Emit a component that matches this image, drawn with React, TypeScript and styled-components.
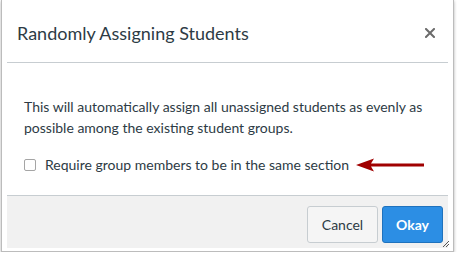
import styled, { createGlobalStyle } from 'styled-components';

const GlobalStyle = createGlobalStyle`
  html, body {
    margin: 0;
    padding: 0;
    background: #ffffff;
  }
  body {
    font-family: Lato, "Open Sans", "Liberation Sans", sans-serif;
    color: #2d3b45;
  }
`;

const App = () => {
  return (
    <>
      <GlobalStyle />
      <Dialog>
        <Header>
          <Title>Randomly Assigning Students</Title>
          <CloseButton aria-label="Close">
            <svg width="10" height="10" viewBox="0 0 10 10">
              <path d="M1 1 L9 9 M9 1 L1 9" stroke="#6b6b6b" strokeWidth="2" strokeLinecap="square" />
            </svg>
          </CloseButton>
        </Header>
        <Body>
          <Message>
            This will automatically assign all unassigned students as evenly as possible among the
            existing student groups.
          </Message>
          <CheckRow>
            <Check type="checkbox" />
            <CheckLabel>Require group members to be in the same section</CheckLabel>
            <Arrow width="69" height="14" viewBox="0 0 69 14">
              <path d="M0 7 L18 0.5 L15 5.5 L68 5.5 L68 8.5 L15 8.5 L18 13.5 Z" fill="#a00000" />
            </Arrow>
          </CheckRow>
        </Body>
        <Footer>
          <Button $w={71}>Cancel</Button>
          <Button $w={61} $primary>
            Okay
          </Button>
        </Footer>
        <Grip width="8" height="8" viewBox="0 0 8 8">
          <path d="M1 7 L7 1 M4 7 L7 4" stroke="#555" strokeWidth="1" />
        </Grip>
      </Dialog>
    </>
  );
};

export default App;

const Dialog = styled.div`
  position: relative;
  box-sizing: border-box;
  width: 453px;
  margin-left: 1px;
  padding: 0 5px 3px;
  border: 1px solid #bcbcbc;
  border-top: none;
  background: #ffffff;
  box-shadow: 0 1px 3px rgba(0, 0, 0, 0.3);
`;
const Header = styled.div`
  box-sizing: border-box;
  height: 63px;
  padding: 4px 13px 0 10px;
  display: flex;
  align-items: center;
  justify-content: space-between;
  border-bottom: 1px solid #c7cdd1;
`;
const Title = styled.div`
  font-size: 18px;
  font-weight: 400;
  color: #2d3b45;
`;
const CloseButton = styled.div`
  display: flex;
  align-items: center;
`;
const Body = styled.div`
  padding: 33px 17px 20px;
  font-size: 14px;
  line-height: 21px;
`;
const Message = styled.p`
  margin: 0 0 16px;
`;
const CheckRow = styled.div`
  display: flex;
  align-items: center;
`;
const Check = styled.input`
  appearance: none;
  box-sizing: border-box;
  width: 12px;
  height: 12px;
  margin: 1px 9px 0 0;
  border: 1px solid #a5a5a5;
  border-radius: 2px;
  background: #ffffff;
`;
const CheckLabel = styled.span`
  white-space: nowrap;
`;
const Arrow = styled.svg`
  margin-left: 7px;
  margin-top: 1px;
`;
const Footer = styled.div`
  display: flex;
  justify-content: flex-end;
  gap: 4px;
  padding: 10px 5px 5px;
  background: #f1f1f1;
  border-top: 1px solid #c7cdd1;
`;
const Button = styled.div<{ $primary?: boolean; $w: number }>`
  box-sizing: border-box;
  height: 37px;
  width: ${(p) => p.$w}px;
  display: flex;
  align-items: center;
  justify-content: center;
  border-radius: 3px;
  font-size: 14px;
  font-weight: ${(p) => (p.$primary ? 700 : 400)};
  color: ${(p) => (p.$primary ? '#ffffff' : '#2d3b45')};
  background: ${(p) => (p.$primary ? '#2c8ee4' : '#f5f5f5')};
  border: 1px solid ${(p) => (p.$primary ? '#1f72bd' : '#c7cdd1')};
`;
const Grip = styled.svg`
  position: absolute;
  right: 3px;
  bottom: 3px;
`;
